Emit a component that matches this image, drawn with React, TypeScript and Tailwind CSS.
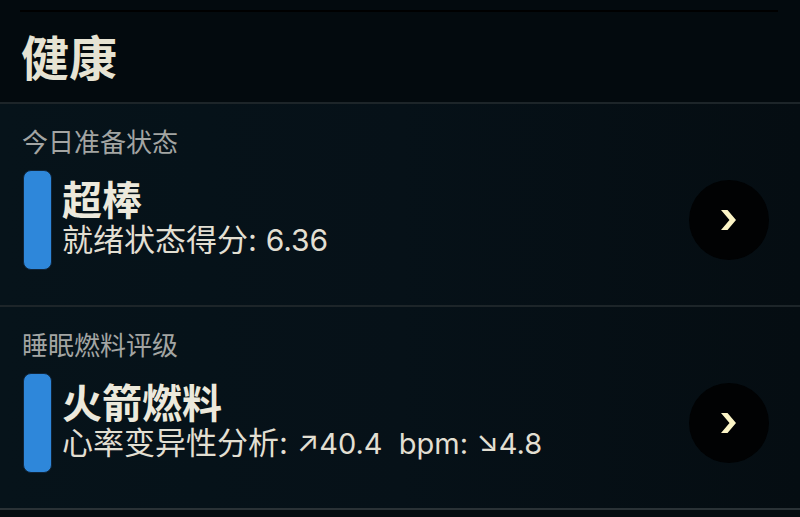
import React from "react";

const font = { fontFamily: '"Inter", "Noto Sans CJK SC", sans-serif' };

function Chevron() {
  return (
    <svg width="16" height="20" viewBox="0 0 16 20">
      <polygon points="0,0 6.5,0 15,10 6.5,20 0,20 8.5,10" fill="#fbf4c6" />
    </svg>
  );
}

function Section({ label, title, sub }: { label: string; title: string; sub: React.ReactNode }) {
  return (
    <div className="bg-gradient-to-r from-[#06131a] via-[#061118] to-[#050d12] pt-[24px] pb-[35px]">
      <div className="ml-[22px] h-[30px] text-[26px] leading-[30px] text-[#a3a5a3]">{label}</div>
      <div className="mt-[12px] flex h-[100px] items-center">
        <div className="ml-[23px] h-[100px] w-[29px] rounded-[8px] border border-[#10253a] bg-[#2e87da]" />
        <div className="ml-[10px] flex h-[100px] flex-1 flex-col pt-[9px]">
          <div className="text-[40px] font-bold leading-[44px] text-[#ece9dc]">{title}</div>
          <div className="whitespace-pre text-[31px] leading-[34px] text-[#e2dfd2]">{sub}</div>
        </div>
        <div className="mr-[31px] flex h-[80px] w-[80px] items-center justify-center rounded-full bg-[#010203]">
          <Chevron />
        </div>
      </div>
    </div>
  );
}

export default function App() {
  return (
    <div style={font} className="h-[517px] w-[800px] overflow-hidden bg-[#030a0e]">
      <div className="h-[102px] pt-[10px]">
        <div className="ml-[20px] mr-[22px] h-[2px] bg-[#000000]" />
        <div className="ml-[21px] mt-[20px] text-[48px] font-bold leading-[54px] text-[#e6e3d3]">健康</div>
      </div>
      <div className="h-[2px] bg-[#1d2529]" />
      <Section
        label="今日准备状态"
        title="超棒"
        sub={
          <>
            就绪状态得分: <span className="text-[30px]">6.36</span>
          </>
        }
      />
      <div className="h-[2px] bg-[#1d2529]" />
      <Section
        label="睡眠燃料评级"
        title="火箭燃料"
        sub={
          <>
            心率变异性分析: <span className="text-[29px]">↗40.4  bpm: ↘4.8</span>
          </>
        }
      />
      <div className="h-[2px] bg-[#2a3236]" />
      <div className="h-[10px] bg-[#050c10]" />
    </div>
  );
}
